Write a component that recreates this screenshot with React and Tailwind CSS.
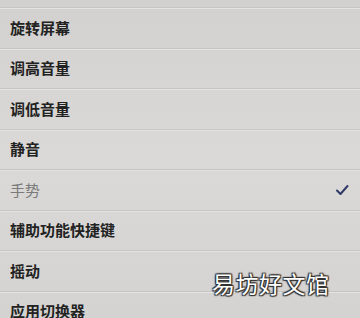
const items = [
  { label: "旋转屏幕" },
  { label: "调高音量" },
  { label: "调低音量" },
  { label: "静音" },
  { label: "手势", muted: true, checked: true },
  { label: "辅助功能快捷键" },
  { label: "摇动" },
  { label: "应用切换器" },
];

const Check = () => (
  <svg width="14" height="12" viewBox="0 0 14 12" fill="none">
    <path d="M2 6.5 L5.5 10 L12.5 2" stroke="#2f3b66" strokeWidth="2" strokeLinecap="round" strokeLinejoin="round" />
  </svg>
);

const App = () => {
  return (
    <div
      className="relative w-[360px] h-[318px] overflow-hidden bg-gradient-to-b from-[#d2d1cf] via-[#dad9d7] to-[#d4d3d1] pt-[7px]"
      style={{ fontFamily: '"Noto Sans CJK SC", "Noto Sans", sans-serif' }}
    >
      <ul>
        {items.map((item) => (
          <li
            key={item.label}
            className="flex items-center justify-between h-[40.5px] pl-[10px] pr-[11px] border-t border-[#c6c5c3] shadow-[inset_0_1px_0_#e3e3e1]"
          >
            <span
              className={
                item.muted
                  ? "text-[15px] text-[#7a7a7a] font-normal"
                  : "text-[15px] text-[#222] font-semibold"
              }
            >
              {item.label}
            </span>
            {item.checked && <Check />}
          </li>
        ))}
      </ul>
      <div className="absolute left-[212px] top-[272px] text-[23px] leading-none text-white tracking-[0.5px] [text-shadow:0_0_1px_#222,1px_1px_1px_#333,-1px_-1px_1px_#333,1px_-1px_1px_#333,-1px_1px_1px_#333]">
        易坊好文馆
      </div>
    </div>
  );
};

export default App;
